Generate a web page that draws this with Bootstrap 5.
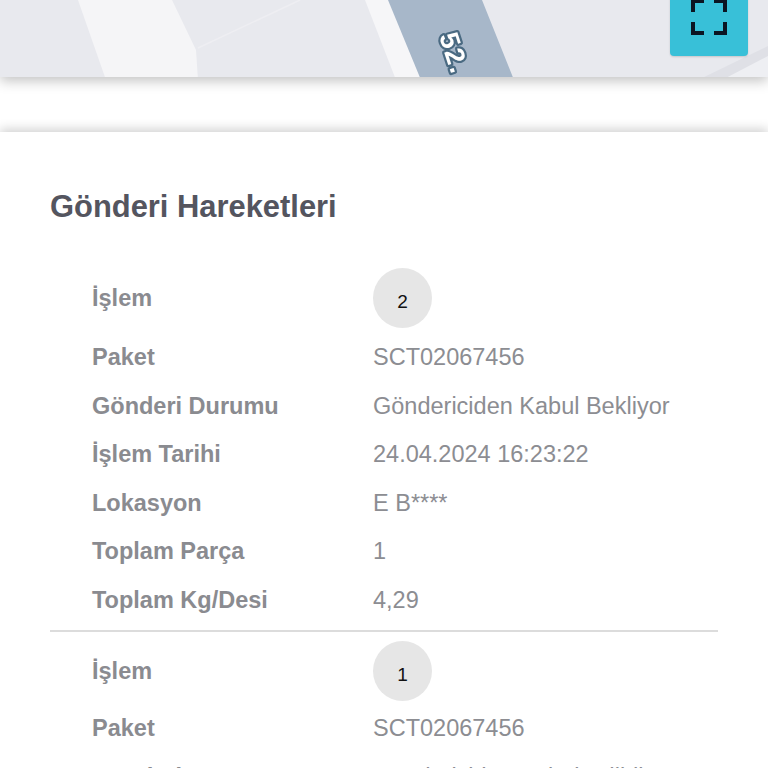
<!DOCTYPE html>
<html lang="tr">
<head>
<meta charset="utf-8">
<title>Gönderi Hareketleri</title>
<link rel="stylesheet" href="https://cdn.jsdelivr.net/npm/bootstrap@5.3.0/dist/css/bootstrap.min.css">
<style>
html, body { height: 768px; overflow: hidden; background: #fff; }
body { font-family: "Liberation Sans", Arial, sans-serif; }
.map-pane { position: relative; height: 77px; background: #e8e9ee; box-shadow: 0 4px 12px rgba(0,0,0,.24); }
.map-art { position: absolute; inset: 0; width: 100%; height: 100%; filter: blur(.6px); }
.map-label { font: 700 27px "Liberation Sans", Arial, sans-serif; letter-spacing: 1.5px; fill: #fff; stroke: #4a6a82; stroke-width: 4.5px; paint-order: stroke; stroke-linejoin: round; }
.expand-btn { position: absolute; top: -10px; right: 20px; width: 78px; height: 66px; padding: 0; border: 0; border-radius: 0 0 4px 4px; background: #38c0d8; box-shadow: 0 1px 2px rgba(0,0,0,.15); }
.expand-btn svg { position: absolute; left: 21px; top: 9px; }
.track-card { margin-top: 55px; height: 640px; padding: 0 50px; border: 0; border-radius: 0; box-shadow: 0 -3px 10px rgba(0,0,0,.18); overflow: hidden; }
.track-title { margin: 0; padding-top: 57px; height: 136px; font-size: 30.9px; font-weight: 700; line-height: 36px; color: #54555f; }
.track-table { margin: 0; table-layout: fixed; font-size: 23.5px; line-height: 28px; }
.track-table th, .track-table td { padding: 10.25px 0; height: 48.5px; vertical-align: middle; background: transparent; }
.track-table th { width: 323px; padding-left: 42px; font-weight: 700; color: #8a8b90; }
.track-table td { color: #8c8d92; }
.track-table .step-row th, .track-table .step-row td { padding: 0 0 5px; height: 65px; }
.track-table .step-row th { padding-left: 42px; }
.track-rule + .track-table .step-row td, .track-rule + .track-table .step-row th { padding-bottom: 3px; height: 63px; }
.step-dot { width: 59px; height: 60px; border-radius: 50%; background: #e6e6e6; color: #111; font-size: 19px; line-height: 1; padding-top: 6px; }
.track-rule { margin: 6px 0 9px; border: 0; height: 2px; background: #dcdcdc; opacity: 1; }
</style>
</head>
<body>
<div class="map-pane">
  <svg class="map-art" viewBox="0 0 768 77" preserveAspectRatio="none" aria-hidden="true">
    <polygon points="78,0 172,0 196,50 198,80 106,80" fill="#f5f5f7"/>
    <polyline points="198,48 300,0" fill="none" stroke="#eeeef2" stroke-width="1.5"/>
    <polygon points="365,0 392,0 424,80 396,80" fill="#f6f6f8"/>
    <polygon points="388,0 482,0 514,80 421,80" fill="#a7b7c9"/>
    <polygon points="768,46 768,80 698,80" fill="#dfe0e6"/>
    <polygon points="768,56 768,80 722,80" fill="#eeeff3"/>
    <text class="map-label" transform="translate(439,36) rotate(72)">52.</text>
  </svg>
  <button type="button" class="btn expand-btn" aria-label="Tam ekran">
    <svg width="36" height="36" viewBox="0 0 36 36" fill="none" stroke="#0b1522" stroke-width="4">
      <path d="M2 13V2H13M23 2H34V13M2 23V34H13M34 23V34H23"/>
    </svg>
  </button>
</div>

<section class="card track-card">
  <h2 class="track-title flex-shrink-0">Gönderi Hareketleri</h2>
  <table class="table table-borderless track-table flex-shrink-0">
    <tbody>
      <tr class="step-row"><th>İşlem</th><td><div class="step-dot d-flex align-items-center justify-content-center">2</div></td></tr>
      <tr><th>Paket</th><td>SCT02067456</td></tr>
      <tr><th>Gönderi Durumu</th><td>Göndericiden Kabul Bekliyor</td></tr>
      <tr><th>İşlem Tarihi</th><td>24.04.2024 16:23:22</td></tr>
      <tr><th>Lokasyon</th><td>E B****</td></tr>
      <tr><th>Toplam Parça</th><td>1</td></tr>
      <tr><th>Toplam Kg/Desi</th><td>4,29</td></tr>
    </tbody>
  </table>
  <hr class="track-rule flex-shrink-0">
  <table class="table table-borderless track-table flex-shrink-0">
    <tbody>
      <tr class="step-row"><th>İşlem</th><td><div class="step-dot d-flex align-items-center justify-content-center">1</div></td></tr>
      <tr><th>Paket</th><td>SCT02067456</td></tr>
      <tr><th>Gönderi Durumu</th><td>Göndericiden Kabul Edildi</td></tr>
    </tbody>
  </table>
</section>
<script src="https://cdn.jsdelivr.net/npm/bootstrap@5.3.0/dist/js/bootstrap.bundle.min.js"></script>
</body>
</html>
